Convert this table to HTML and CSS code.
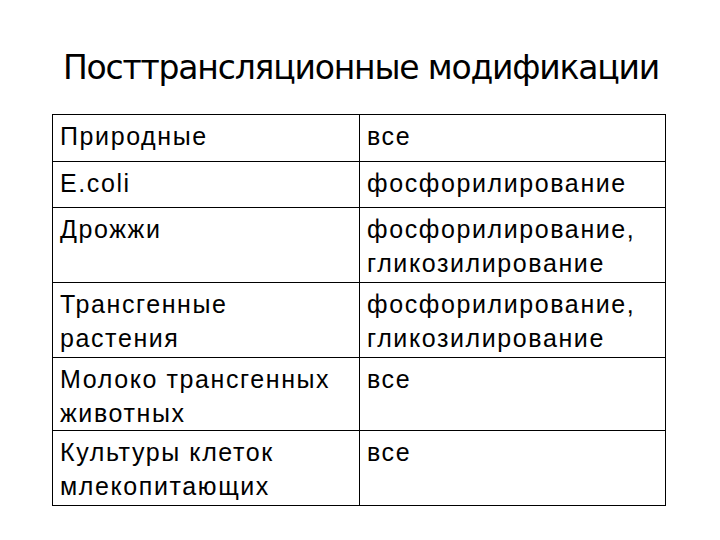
FILE: index.html
```html
<!DOCTYPE html>
<html lang="ru">
<head>
<meta charset="utf-8">
<link rel="stylesheet" href="styles.css">
<title>Посттрансляционные модификации</title>
</head>
<body>
<div class="slide">
  <h1 class="title">Посттрансляционные модификации</h1>
  <div class="grid">
    <div class="cell r1">Природные</div>
    <div class="cell r1">все</div>
    <div class="cell r2">E.coli</div>
    <div class="cell r2">фосфорилирование</div>
    <div class="cell r3">Дрожжи</div>
    <div class="cell r3">фосфорилирование,<br>гликозилирование</div>
    <div class="cell r4">Трансгенные<br>растения</div>
    <div class="cell r4">фосфорилирование,<br>гликозилирование</div>
    <div class="cell r5">Молоко трансгенных<br>животных</div>
    <div class="cell r5">все</div>
    <div class="cell r6">Культуры клеток<br>млекопитающих</div>
    <div class="cell r6">все</div>
  </div>
</div>
</body>
</html>
```
FILE: styles.css
```css
html, body {
  margin: 0;
  padding: 0;
  background: #ffffff;
}
.slide {
  width: 720px;
  height: 540px;
  padding-top: 48px;
  box-sizing: border-box;
  color: #000;
}
.title {
  margin: 0 0 0 63px;
  font-family: "DejaVu Sans", sans-serif;
  font-weight: normal;
  font-size: 33px;
  letter-spacing: -1.2px;
  line-height: 40px;
  height: 40px;
  white-space: nowrap;
}
.grid {
  margin: 26px 0 0 52px;
  display: grid;
  grid-template-columns: 307px 306px;
  grid-template-rows: 47px 46px 75px 75px 73px 75px;
  border-top: 1px solid #000;
  border-left: 1px solid #000;
  width: 613px;
  font-family: "Liberation Sans", Arial, sans-serif;
  font-size: 25px;
  line-height: 34px;
  letter-spacing: 1.6px;
}
.cell {
  border-right: 1px solid #000;
  border-bottom: 1px solid #000;
  padding: 4px 0 0 7px;
  white-space: nowrap;
}
```
